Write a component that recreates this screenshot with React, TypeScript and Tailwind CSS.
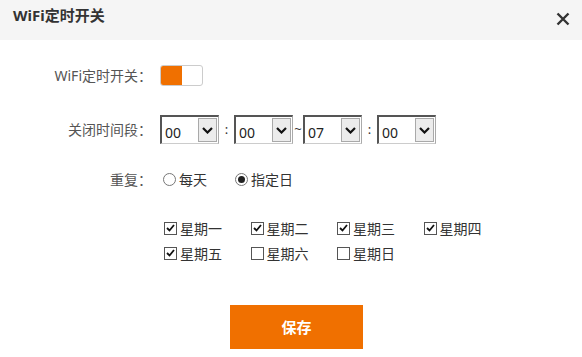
import { useState } from "react";

const days = [
  { label: "星期一", on: true },
  { label: "星期二", on: true },
  { label: "星期三", on: true },
  { label: "星期四", on: true },
  { label: "星期五", on: true },
  { label: "星期六", on: false },
  { label: "星期日", on: false },
];

function TimeSelect({ value }: { value: string }) {
  return (
    <div className="flex h-[29px] w-[59px] items-stretch border-t-2 border-l-2 border-r border-b border-t-[#555] border-l-[#555] border-r-[#aaa] border-b-[#ccc] bg-white">
      <span className="flex flex-1 items-end pb-[3px] pl-[3px] text-[14px] leading-none text-[#222]">{value}</span>
      <span className="m-[1px] grid w-[19px] place-items-center border border-[#a9a9a9] bg-[#ececec]">
        <svg width="11" height="7" viewBox="0 0 11 7">
          <path d="M1 1l4.5 4.5L10 1" fill="none" stroke="#111" strokeWidth="2.2" />
        </svg>
      </span>
    </div>
  );
}

function Check({ on }: { on: boolean }) {
  return (
    <span className="grid h-[13px] w-[13px] place-items-center border border-[#555] bg-white">
      {on && (
        <svg width="9" height="8" viewBox="0 0 9 8">
          <path d="M1 4l2.5 2.5L8 1" fill="none" stroke="#111" strokeWidth="1.8" />
        </svg>
      )}
    </span>
  );
}

function Radio({ on }: { on: boolean }) {
  return (
    <span className="grid h-[13px] w-[13px] place-items-center rounded-full border border-[#777] bg-white">
      {on && <span className="h-[7px] w-[7px] rounded-full bg-[#222]" />}
    </span>
  );
}

export default function App() {
  const [enabled] = useState(true);
  return (
    <div className="h-[357px] w-[582px] bg-white font-['Noto_Sans','Noto_Sans_CJK_SC',sans-serif] text-[#555]">
      <div className="flex h-[40px] items-center justify-between bg-[#f5f5f5] pl-[13px] pr-[12px]">
        <h1 className="-mt-[10px] text-[15px] font-bold text-[#333]">WiFi定时开关</h1>
        <svg width="14" height="14" viewBox="0 0 14 14" className="-mt-[3px]">
          <path d="M1.5 1.5l11 11M12.5 1.5l-11 11" stroke="#333" strokeWidth="2.4" />
        </svg>
      </div>

      <div className="mt-[25px] flex h-[21px] items-center">
        <span className="w-[152px] text-right text-[14px]">WiFi定时开关：</span>
        <span className="ml-[8px] flex h-[21px] w-[43px] rounded-[3px] border border-[#ccc] bg-white">
          {enabled && <span className="h-full w-[21px] rounded-l-[2px] bg-[#f07000]" />}
        </span>
      </div>

      <div className="mt-[29px] flex h-[29px] items-center">
        <span className="w-[152px] text-right text-[14px]">关闭时间段：</span>
        <div className="ml-[8px] flex items-center">
          <TimeSelect value="00" />
          <span className="w-[15px] text-center text-[13px] text-[#333]">:</span>
          <TimeSelect value="00" />
          <span className="w-[10px] text-center text-[13px] text-[#333]">~</span>
          <TimeSelect value="07" />
          <span className="w-[15px] text-center text-[13px] text-[#333]">:</span>
          <TimeSelect value="00" />
        </div>
      </div>

      <div className="mt-[25px] flex h-[20px] items-center">
        <span className="w-[152px] text-right text-[14px]">重复：</span>
        <label className="ml-[11px] flex items-center gap-[3px] text-[14px] text-[#333]">
          <Radio on={false} />
          每天
        </label>
        <label className="ml-[28px] flex items-center gap-[3px] text-[14px] text-[#333]">
          <Radio on={true} />
          指定日
        </label>
      </div>

      <div className="ml-[164px] mt-[30px] grid w-[346px] grid-cols-4 gap-y-[7px]">
        {days.map((d) => (
          <label key={d.label} className="flex h-[18px] items-center gap-[3px] text-[14px] text-[#333]">
            <Check on={d.on} />
            {d.label}
          </label>
        ))}
      </div>

      <button className="ml-[230px] mt-[43px] h-[44px] w-[133px] bg-[#f07000] text-[15px] font-bold text-white">
        保存
      </button>
    </div>
  );
}
